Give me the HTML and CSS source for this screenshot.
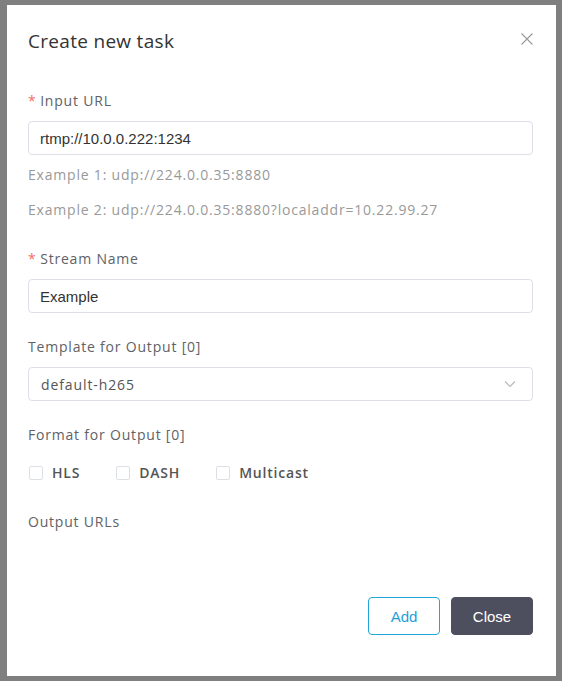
FILE: index.html
```html
<!DOCTYPE html>
<html>
<head>
<meta charset="utf-8">
<link rel="stylesheet" href="styles.css">
</head>
<body>
<div class="backdrop">
  <div class="modal">
    <div class="modal-header">
      <h2 class="modal-title">Create new task</h2>
      <svg class="close-icon" width="12" height="12" viewBox="0 0 12 12"><path d="M0.5 0.5L11.5 11.5M11.5 0.5L0.5 11.5" stroke="#9a9a9a" stroke-width="1.1" fill="none"/></svg>
    </div>
    <div class="modal-body">
      <div class="label"><span class="req">*</span> Input URL</div>
      <div class="input"><span class="input-text">rtmp://10.0.0.222:1234</span></div>
      <div class="hint hint-1">Example 1: udp://224.0.0.35:8880</div>
      <div class="hint hint-2">Example 2: udp://224.0.0.35:8880?localaddr=10.22.99.27</div>

      <div class="label label-gap-lg"><span class="req">*</span> Stream Name</div>
      <div class="input"><span class="input-text">Example</span></div>

      <div class="label label-gap">Template for Output [0]</div>
      <div class="input select">
        <span class="select-text">default-h265</span>
        <svg class="chevron" width="12" height="8" viewBox="0 0 12 8"><path d="M1 1.5L6 6.5L11 1.5" stroke="#b8b8b8" stroke-width="1.2" fill="none"/></svg>
      </div>

      <div class="label label-gap">Format for Output [0]</div>
      <div class="checks">
        <label class="check"><span class="box"></span>HLS</label>
        <label class="check"><span class="box"></span>DASH</label>
        <label class="check"><span class="box"></span>Multicast</label>
      </div>

      <div class="label label-gap-lg">Output URLs</div>
    </div>
    <div class="modal-footer">
      <button class="btn btn-add">Add</button>
      <button class="btn btn-close">Close</button>
    </div>
  </div>
</div>
</body>
</html>
```
FILE: styles.css
```css
html, body {
  margin: 0;
  padding: 0;
}
body {
  width: 562px;
  height: 681px;
  overflow: hidden;
  background: #7f7f7f;
  font-family: "Open Sans", "Noto Sans", sans-serif;
}
.backdrop {
  width: 562px;
  height: 681px;
  padding: 5px 0 0 7px;
  box-sizing: border-box;
}
.modal {
  width: 549px;
  height: 671px;
  background: #fff;
  box-sizing: border-box;
  padding: 0 23px 0 21px;
  display: flex;
  flex-direction: column;
}
.modal-header {
  display: flex;
  justify-content: space-between;
  align-items: center;
  padding-top: 20px;
  height: 32px;
}
.modal-title {
  margin: 0;
  font-size: 19px;
  font-weight: 400;
  letter-spacing: 0.3px;
  color: #333;
  line-height: 32px;
}
.close-icon {
  margin-bottom: 4px;
}
.modal-body {
  padding-top: 34px;
  flex: 1;
}
.label {
  font-size: 14px;
  line-height: 20px;
  letter-spacing: 0.8px;
  color: #606266;
  margin-bottom: 10px;
}
.label-gap { margin-top: 24px; }
.label-gap-lg { margin-top: 29px; }
.req {
  color: #f56c6c;
  letter-spacing: 0;
}
.input {
  height: 34px;
  box-sizing: border-box;
  border: 1px solid #dcdfe6;
  border-radius: 4px;
  padding: 0 11px;
  display: flex;
  align-items: center;
}
.input-text {
  font-family: "Liberation Sans", Arial, sans-serif;
  font-size: 15px;
  color: #333;
}
.select {
  justify-content: space-between;
  padding-right: 16px;
}
.select-text {
  font-size: 14px;
  letter-spacing: 0.9px;
  color: #555;
  padding-left: 1px;
}
.hint {
  font-size: 14px;
  line-height: 20px;
  letter-spacing: 0.8px;
  color: #999;
}
.hint-1 { margin-top: 10px; }
.hint-2 { margin-top: 15px; }
.checks {
  display: flex;
  margin-top: 18px;
  line-height: 20px;
}
.check {
  display: flex;
  align-items: center;
  font-size: 14px;
  font-weight: 600;
  letter-spacing: 0.8px;
  color: #555;
  margin-right: 35px;
}
.box {
  width: 12px;
  height: 12px;
  border: 1px solid #dcdfe6;
  border-radius: 2px;
  margin: 0 9px 0 1px;
  background: #fff;
}
.modal-footer {
  display: flex;
  justify-content: flex-end;
  gap: 11px;
  padding-bottom: 41px;
}
.btn {
  height: 38px;
  border-radius: 4px;
  font-family: "Liberation Sans", Arial, sans-serif;
  font-size: 15px;
  padding: 0;
  cursor: pointer;
}
.btn-add {
  width: 72px;
  background: #fff;
  border: 1px solid #22a6d8;
  color: #1fa0d8;
}
.btn-close {
  width: 82px;
  background: #4d4f5e;
  border: 1px solid #4d4f5e;
  color: #fff;
}
```
